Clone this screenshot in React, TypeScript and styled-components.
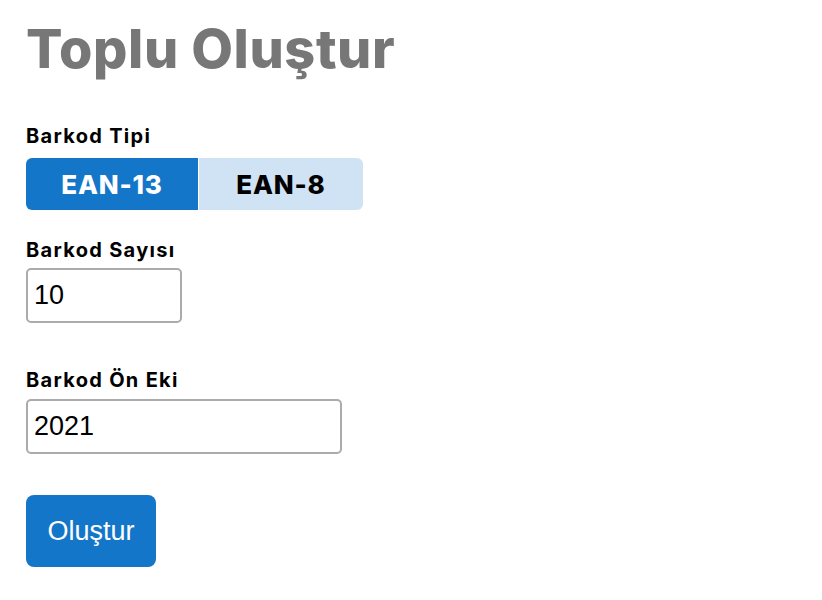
import React, { useState } from "react";
import styled, { createGlobalStyle } from "styled-components";

const GlobalStyle = createGlobalStyle`
  html, body {
    margin: 0;
    padding: 0;
    background: #fff;
  }
  body {
    font-family: Inter, "Open Sans", sans-serif;
  }
`;

const Page = styled.div`
  padding: 19px 26px 0;
`;

const Title = styled.h1`
  margin: 0 0 45px;
  font-family: Inter, sans-serif;
  font-weight: 800;
  font-size: 54px;
  line-height: 60px;
  color: #777777;
  letter-spacing: 0.6px;
`;

const Field = styled.div<{ $gap: number }>`
  display: flex;
  flex-direction: column;
  align-items: flex-start;
  margin-bottom: ${(p) => p.$gap}px;
`;

const Label = styled.label<{ $space: number }>`
  font-family: Inter, sans-serif;
  font-weight: 700;
  font-size: 20px;
  line-height: 24px;
  letter-spacing: 1.3px;
  color: #000;
  margin-bottom: ${(p) => p.$space}px;
`;

const Toggle = styled.div`
  display: flex;
  width: 337px;
  height: 52px;
  border-radius: 6px;
  overflow: hidden;
`;

const ToggleButton = styled.button<{ $active: boolean; $width: number }>`
  width: ${(p) => p.$width}px;
  border: none;
  margin: 0;
  padding: 0;
  cursor: pointer;
  font-family: Inter, sans-serif;
  font-weight: 800;
  font-size: 26px;
  letter-spacing: 0.8px;
  background: ${(p) => (p.$active ? "#1476c8" : "#d0e3f5")};
  color: ${(p) => (p.$active ? "#fff" : "#000")};
  & + & {
    margin-left: 1px;
  }
`;

const Input = styled.input<{ $width: number; $height: number }>`
  box-sizing: border-box;
  width: ${(p) => p.$width}px;
  height: ${(p) => p.$height}px;
  padding: 0 6px;
  border: 2px solid #ababab;
  border-radius: 5px;
  font-family: "Liberation Sans", Arial, sans-serif;
  font-size: 27px;
  color: #000;
  outline: none;
`;

const SubmitButton = styled.button`
  width: 130px;
  height: 72px;
  border: none;
  border-radius: 8px;
  background: #1476c8;
  color: #fff;
  font-family: "Liberation Sans", Arial, sans-serif;
  font-size: 27px;
  cursor: pointer;
`;

export default function App() {
  const [type, setType] = useState<"ean13" | "ean8">("ean13");
  const [count, setCount] = useState("10");
  const [prefix, setPrefix] = useState("2021");

  return (
    <>
      <GlobalStyle />
      <Page>
        <Title>Toplu Oluştur</Title>
        <Field $gap={28}>
          <Label $space={10}>Barkod Tipi</Label>
          <Toggle>
            <ToggleButton
              $width={172}
              $active={type === "ean13"}
              onClick={() => setType("ean13")}
            >
              EAN-13
            </ToggleButton>
            <ToggleButton
              $width={164}
              $active={type === "ean8"}
              onClick={() => setType("ean8")}
            >
              EAN-8
            </ToggleButton>
          </Toggle>
        </Field>
        <Field $gap={45}>
          <Label $space={6}>Barkod Sayısı</Label>
          <Input
            $width={156}
            $height={55}
            value={count}
            onChange={(e) => setCount(e.target.value)}
          />
        </Field>
        <Field $gap={41}>
          <Label $space={7}>Barkod Ön Eki</Label>
          <Input
            $width={316}
            $height={55}
            value={prefix}
            onChange={(e) => setPrefix(e.target.value)}
          />
        </Field>
        <SubmitButton>Oluştur</SubmitButton>
      </Page>
    </>
  );
}
